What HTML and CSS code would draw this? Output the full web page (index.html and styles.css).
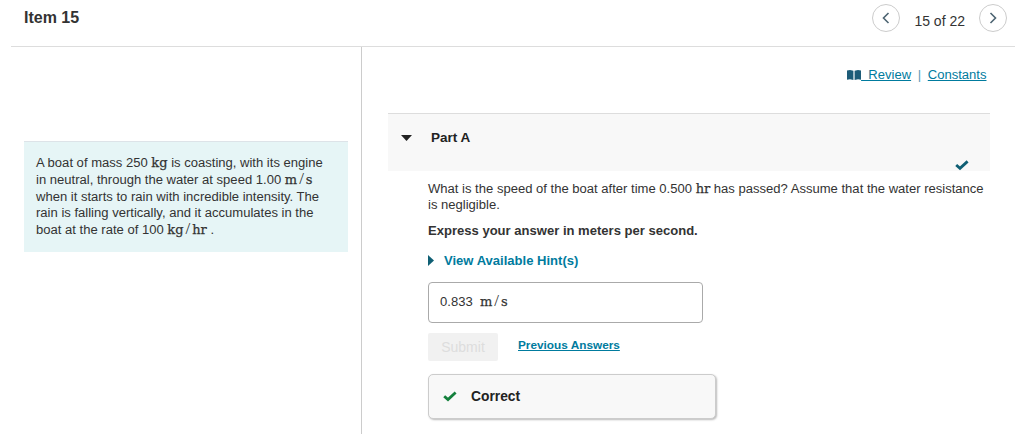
FILE: index.html
```html
<!DOCTYPE html>
<html lang="en">
<head>
  <meta charset="UTF-8">
  <title>Item 15</title>
  <link rel="stylesheet" href="styles.css">
</head>
<body>
  <header class="top-bar">
    <h1>Item 15</h1>
    <nav class="pager">
      <a class="pager-btn" href="#">
        <svg width="8" height="12" viewBox="0 0 8 12"><path d="M6.5 1 1.5 6l5 5" fill="none" stroke="#4d6472" stroke-width="1.6"/></svg>
      </a>
      <span class="pager-text">15 of 22</span>
      <a class="pager-btn" href="#">
        <svg width="8" height="12" viewBox="0 0 8 12"><path d="M1.5 1l5 5-5 5" fill="none" stroke="#4d6472" stroke-width="1.6"/></svg>
      </a>
    </nav>
  </header>

  <div class="columns">
    <aside class="left-col">
      <div class="intro">
        A boat of mass 250 <span class="math">kg</span> is coasting, with its engine<br>
        in neutral, through the water at speed 1.00 <span class="math">m<span class="slash">/</span>s</span><br>
        when it starts to rain with incredible intensity. The<br>
        rain is falling vertically, and it accumulates in the<br>
        boat at the rate of 100 <span class="math">kg<span class="slash">/</span>hr</span> .
      </div>
    </aside>

    <main class="right-col">
      <div class="links">
        <a href="#"><svg class="book" width="14" height="10" viewBox="0 0 14 10"><path d="M0 .5 3 0l3.4.8V10L3 9.2 0 9.8zM14 .5 11 0 7.6.8V10l3.4-.8 3 .6z" fill="#1d5c78"/></svg>&nbsp;&nbsp;Review</a>
        <span class="sep">|</span>
        <a href="#">Constants</a>
      </div>

      <section class="part-head">
        <svg class="caret-down" width="11" height="6" viewBox="0 0 11 6"><path d="M0 0h11L5.5 6z" fill="#222"/></svg>
        <h2>Part A</h2>
        <svg class="part-check" width="14" height="11" viewBox="0 0 14 11"><path d="M1.2 5 5 8.4 12.6 1.4" fill="none" stroke="#0f5f74" stroke-width="2.8"/></svg>
      </section>

      <section class="part-body">
        <p class="question">What is the speed of the boat after time 0.500 <span class="math">hr</span> has passed? Assume that the water resistance is negligible.</p>
        <p class="express">Express your answer in meters per second.</p>
        <a class="hints" href="#">
          <svg width="6" height="11" viewBox="0 0 6 11"><path d="M0 0l6 5.5L0 11z" fill="#0f5f74"/></svg>
          View Available Hint(s)
        </a>
        <div class="answer-box">0.833 &nbsp;<span class="math">m<span class="slash">/</span>s</span></div>
        <div class="actions">
          <button class="submit" disabled>Submit</button>
          <a class="prev" href="#">Previous Answers</a>
        </div>
        <div class="feedback">
          <svg width="14" height="11" viewBox="0 0 14 11"><path d="M1.2 5.2 5 8.6 12.6 1.4" fill="none" stroke="#14803c" stroke-width="2.8"/></svg>
          <strong>Correct</strong>
        </div>
      </section>
    </main>
  </div>
</body>
</html>
```

FILE: styles.css
```css
* {
  margin: 0;
  padding: 0;
  box-sizing: border-box;
}

html, body {
  height: 434px;
  overflow: hidden;
}

body {
  font-family: "Liberation Sans", Arial, sans-serif;
  font-size: 13.05px;
  color: #333;
  background-color: #fff;
}

a {
  color: #007b9e;
}

.math {
  font-family: "DejaVu Serif", "Liberation Serif", serif;
  font-size: 13px;
  line-height: 0;
  color: #333;
  -webkit-text-stroke: 0.25px #333;
}

.slash {
  margin: 0 2px;
  font-family: "Liberation Serif", serif;
  font-size: 17px;
  font-weight: normal;
  -webkit-text-stroke: 0;
}

/* top bar */
.top-bar {
  display: flex;
  justify-content: space-between;
  align-items: center;
  height: 47px;
  margin-left: 11px;
  padding: 0 8px 10px 13px;
  border-bottom: 1px solid #ddd;
}

.top-bar h1 {
  font-size: 16px;
  font-weight: bold;
  color: #333;
}

.pager {
  display: flex;
  align-items: center;
}

.pager-btn {
  display: flex;
  justify-content: center;
  align-items: center;
  width: 28px;
  height: 28px;
  border: 1px solid #ccc;
  border-radius: 50%;
}

.pager-text {
  margin: 0 14px;
  padding-top: 6px;
  font-size: 14px;
}

/* columns */
.columns {
  display: flex;
  height: 387px;
}

.left-col {
  width: 362px;
  padding: 94px 13px 0 24px;
  border-right: 1px solid #ccc;
}

.intro {
  height: 111px;
  padding: 13px 0 0 12px;
  line-height: 16.8px;
  white-space: nowrap;
  background-color: #e6f5f6;
  border-top: 1px solid #dde3e8;
}

.right-col {
  flex: 1;
  padding: 0 25px 0 26px;
}

.links {
  height: 66px;
  padding: 20px 3.5px 0 0;
  text-align: right;
}

.links .sep {
  color: #5a9ab5;
  margin: 0 3px;
}

.book {
  vertical-align: -1px;
}

.part-head {
  display: flex;
  position: relative;
  height: 58px;
  padding: 15px 0 0 13px;
  background-color: #f8f8f8;
  border-top: 1px solid #ddd;
}

.part-head h2 {
  margin-left: 19px;
  font-size: 13.5px;
  line-height: 17px;
  color: #222;
}

.caret-down {
  margin-top: 6px;
}

.part-check {
  position: absolute;
  right: 21px;
  bottom: 0;
}

.part-body {
  padding: 10px 0 0 40px;
}

.question {
  line-height: 16px;
}

.express {
  margin-top: 9px;
  font-weight: bold;
  line-height: 17px;
}

.hints {
  display: flex;
  align-items: center;
  gap: 10px;
  margin-top: 13px;
  font-weight: bold;
  line-height: 17px;
  text-decoration: none;
}

.answer-box {
  width: 275px;
  height: 41px;
  margin-top: 13px;
  padding: 9px 11px;
  line-height: 19px;
  border: 1px solid #aaa;
  border-radius: 4px;
}

.actions {
  display: flex;
  align-items: center;
  gap: 20px;
  margin-top: 10px;
}

.submit {
  width: 70px;
  height: 28px;
  font-family: inherit;
  font-size: 14px;
  color: #ddd;
  background-color: #f1f1f1;
  border: none;
  border-radius: 2px;
}

.prev {
  margin-bottom: 4px;
  font-size: 11.8px;
  font-weight: bold;
}

.feedback {
  display: flex;
  align-items: center;
  gap: 14px;
  width: 288px;
  height: 45px;
  margin-top: 13px;
  padding-left: 14px;
  background-color: #f8f8f8;
  border: 1px solid #ccc;
  border-radius: 5px;
  box-shadow: 1px 1px 2px #bbb;
}

.feedback strong {
  font-size: 13.8px;
  color: #222;
}
```
